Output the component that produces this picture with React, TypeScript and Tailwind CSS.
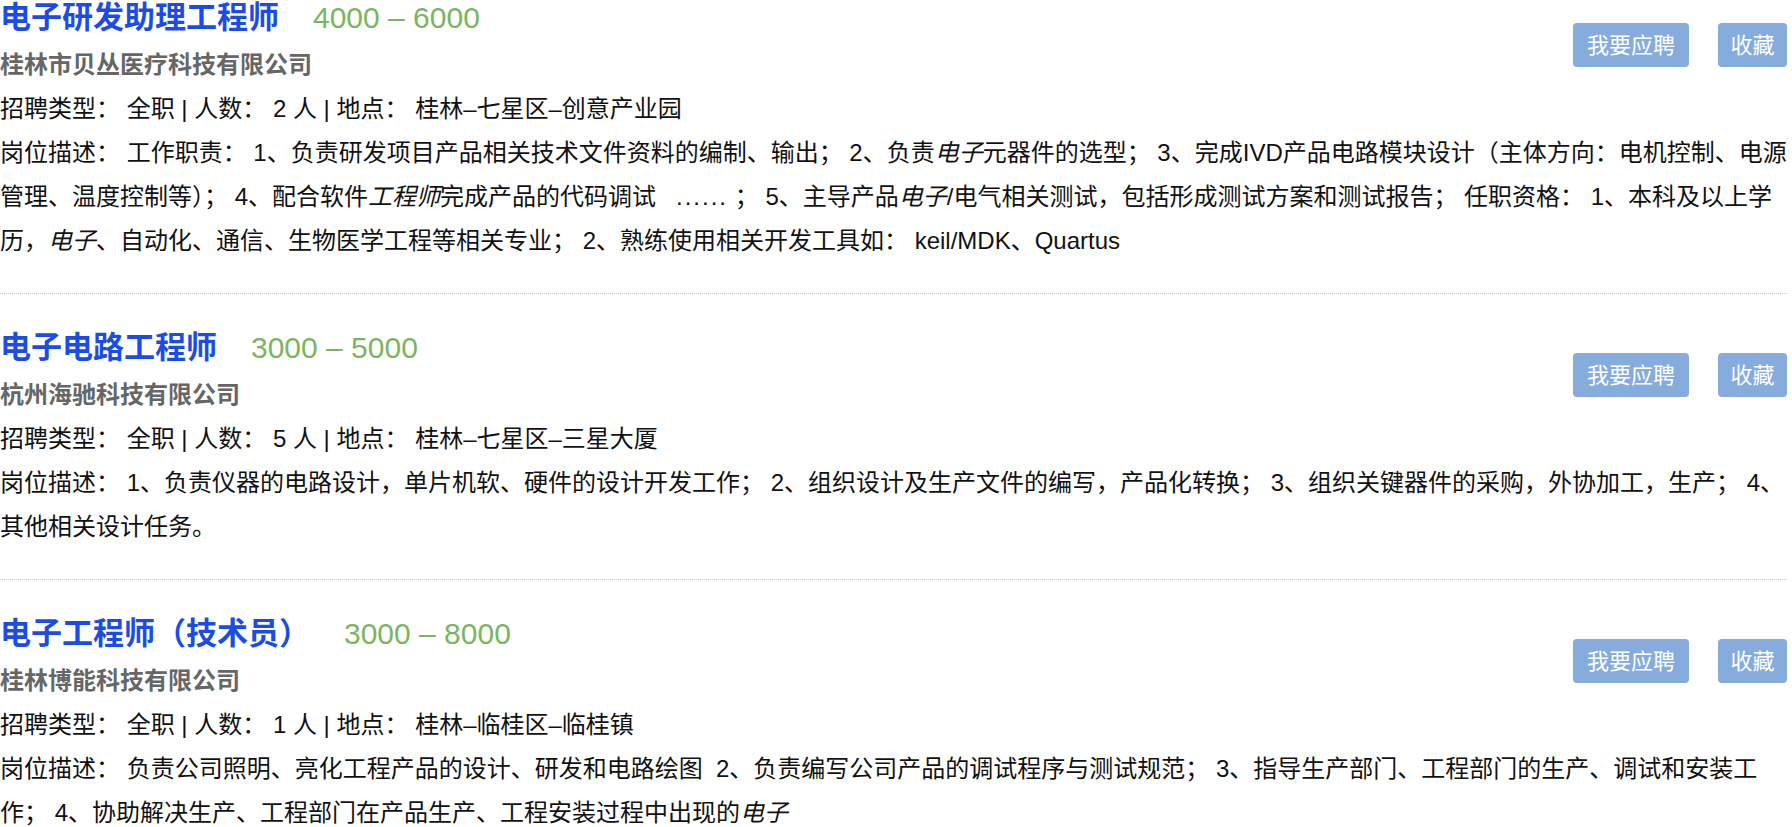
const FONT = "font-['Liberation_Sans','Noto_Sans_CJK_SC',sans-serif]";

interface Job {
  title: string;
  salary: string;
  company: string;
  count: number;
  place: string;
  lines: React.ReactNode[];
}

const Em = ({ children }: { children: React.ReactNode }) => <em className="italic">{children}</em>;

const jobs: Job[] = [
  {
    title: "电子研发助理工程师",
    salary: "4000 – 6000",
    company: "桂林市贝丛医疗科技有限公司",
    count: 2,
    place: "桂林–七星区–创意产业园",
    lines: [
      <>岗位描述： 工作职责： 1、负责研发项目产品相关技术文件资料的编制、输出； 2、负责<Em>电子</Em>元器件的选型； 3、完成IVD产品电路模块设计（主体方向：电机控制、电源</>,
      <>管理、温度控制等）； 4、配合软件<Em>工程师</Em>完成产品的代码调试&nbsp;&nbsp; <span className="tracking-[2px]">......</span>&nbsp;； 5、主导产品<Em>电子</Em>/电气相关测试，包括形成测试方案和测试报告； 任职资格： 1、本科及以上学</>,
      <>历，<Em>电子</Em>、自动化、通信、生物医学工程等相关专业； 2、熟练使用相关开发工具如： keil/MDK、Quartus</>,
    ],
  },
  {
    title: "电子电路工程师",
    salary: "3000 – 5000",
    company: "杭州海驰科技有限公司",
    count: 5,
    place: "桂林–七星区–三星大厦",
    lines: [
      <>岗位描述： 1、负责仪器的电路设计，单片机软、硬件的设计开发工作； 2、组织设计及生产文件的编写，产品化转换； 3、组织关键器件的采购，外协加工，生产； 4、</>,
      <>其他相关设计任务。</>,
    ],
  },
  {
    title: "电子工程师（技术员）",
    salary: "3000 – 8000",
    company: "桂林博能科技有限公司",
    count: 1,
    place: "桂林–临桂区–临桂镇",
    lines: [
      <>岗位描述： 负责公司照明、亮化工程产品的设计、研发和电路绘图&nbsp; 2、负责编写公司产品的调试程序与测试规范； 3、指导生产部门、工程部门的生产、调试和安装工</>,
      <>作； 4、协助解决生产、工程部门在产品生产、工程安装过程中出现的<Em>电子</Em></>,
    ],
  },
];

function JobItem({ job, first, last }: { job: Job; first: boolean; last: boolean }) {
  return (
    <div className={`${first ? "" : "pt-[36px]"} ${last ? "" : "pb-[30px] border-b border-dotted border-[#c8c8c8]"}`}>
      <div className="flex justify-between items-start">
        <div>
          <div className="flex items-baseline leading-[36px] whitespace-nowrap">
            <span className="text-[31px] font-bold text-[#1b4de6]">{job.title}</span>
            <span className="ml-[34px] text-[30px] text-[#7ab65e]">{job.salary}</span>
          </div>
          <div className="mt-[7px] leading-[44px] text-[24px] font-bold text-[#666]">{job.company}</div>
        </div>
        <div className="flex gap-[29px] mt-[23px]">
          <button className="w-[116px] h-[44px] rounded-[4px] bg-[#85acdd] text-white text-[22px]">我要应聘</button>
          <button className="w-[69px] h-[44px] rounded-[4px] bg-[#85acdd] text-white text-[22px]">收藏</button>
        </div>
      </div>
      <div className="text-[24px] leading-[44px] text-[#111]">
        <div className="whitespace-nowrap">
          招聘类型： 全职 | 人数： {job.count} 人 | 地点： {job.place}
        </div>
        {job.lines.map((line, i) => (
          <div key={i} className="whitespace-nowrap">
            {line}
          </div>
        ))}
      </div>
    </div>
  );
}

export default function App() {
  return (
    <div className={`${FONT} bg-white w-full min-h-screen pr-[5px] overflow-hidden`}>
      {jobs.map((job, i) => (
        <JobItem key={i} job={job} first={i === 0} last={i === jobs.length - 1} />
      ))}
    </div>
  );
}
